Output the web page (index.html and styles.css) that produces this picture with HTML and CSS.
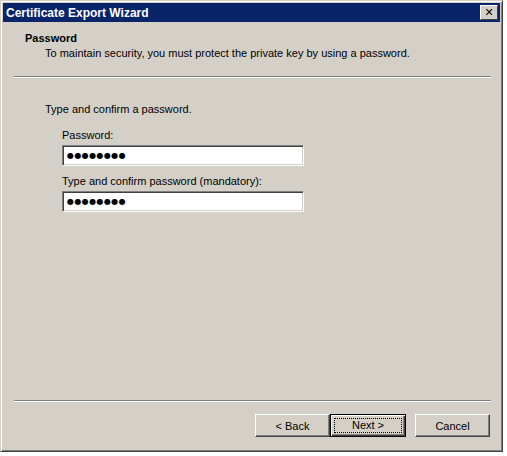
FILE: index.html
```html
<!DOCTYPE html>
<html lang="en">
<head>
    <meta charset="UTF-8">
    <title>Certificate Export Wizard</title>
    <link rel="stylesheet" href="styles.css">
</head>
<body>
    <div class="window">
        <div class="titlebar">
            <span class="title">Certificate Export Wizard</span>
            <span class="close">&#x2715;</span>
        </div>
        <div class="header">
            <div class="heading">Password</div>
            <div class="subheading">To maintain security, you must protect the private key by using a password.</div>
        </div>
        <div class="separator"></div>
        <div class="content">
            <p class="intro">Type and confirm a password.</p>
            <div class="fields">
                <label for="pw1">Password:</label>
                <div class="field" id="pw1">&#9679;&#9679;&#9679;&#9679;&#9679;&#9679;&#9679;&#9679;</div>
                <label for="pw2">Type and confirm password (mandatory):</label>
                <div class="field" id="pw2">&#9679;&#9679;&#9679;&#9679;&#9679;&#9679;&#9679;&#9679;</div>
            </div>
        </div>
        <div class="separator"></div>
        <div class="buttons">
            <button class="btn">&lt; Back</button>
            <button class="btn default"><span class="focus">Next &gt;</span></button>
            <button class="btn cancel">Cancel</button>
        </div>
    </div>
</body>
</html>
```
FILE: styles.css
```css
body {
    margin: 0;
    background: #ffffff;
    font-family: "Liberation Sans", Arial, sans-serif;
    font-size: 11px;
    color: #000;
}
.window {
    box-sizing: border-box;
    width: 503px;
    height: 452px;
    background: #d4d0c8;
    border-top: 1px solid #d4d0c8;
    border-left: 1px solid #d4d0c8;
    border-right: 1px solid #404040;
    border-bottom: 1px solid #404040;
    box-shadow: inset 1px 1px 0 #ffffff, inset -1px -1px 0 #808080;
    padding: 2px;
    display: flex;
    flex-direction: column;
}
.titlebar {
    height: 19px;
    background: #0a246a;
    display: flex;
    align-items: center;
    justify-content: space-between;
    padding: 0 2px 0 3px;
}
.title {
    color: #fff;
    font-weight: bold;
    font-size: 12px;
}
.close {
    width: 18px;
    height: 15px;
    box-sizing: border-box;
    background: #d4d0c8;
    border: 1px solid;
    border-color: #fff #404040 #404040 #fff;
    font-family: "DejaVu Sans", sans-serif;
    font-size: 11px;
    font-weight: bold;
    line-height: 13px;
    text-align: center;
}
.header {
    padding: 9px 0 0 22px;
    height: 45px;
}
.heading {
    font-weight: bold;
    line-height: 14px;
}
.subheading {
    padding-left: 20px;
    margin-top: 1px;
    line-height: 14px;
}
.separator {
    margin: 0 9px 0 11px;
    border-top: 1px solid #808080;
    border-bottom: 1px solid #ffffff;
    height: 0;
}
.content {
    flex: 1;
    padding: 24px 0 0 42px;
}
.intro {
    margin: 0;
    line-height: 14px;
}
.fields {
    padding: 12px 0 0 17px;
    display: flex;
    flex-direction: column;
}
.fields label {
    line-height: 14px;
}
.field {
    box-sizing: border-box;
    width: 242px;
    height: 21px;
    margin: 3px 0 8px;
    background: #fff;
    border-top: 1px solid #808080;
    border-left: 1px solid #808080;
    border-right: 1px solid #fff;
    border-bottom: 1px solid #fff;
    box-shadow: inset 1px 1px 0 #404040, inset -1px -1px 0 #d4d0c8;
    padding: 0 4px;
    font-family: "DejaVu Sans", sans-serif;
    font-size: 8px;
    letter-spacing: 0.4px;
    line-height: 19px;
}
.buttons {
    height: 47px;
    display: flex;
    justify-content: flex-end;
    align-items: flex-start;
    padding: 12px 10px 0 0;
    box-sizing: border-box;
}
.btn {
    box-sizing: border-box;
    width: 75px;
    height: 23px;
    background: #d4d0c8;
    border: 1px solid;
    border-color: #fff #404040 #404040 #fff;
    box-shadow: inset -1px -1px 0 #808080;
    font-family: "Liberation Sans", Arial, sans-serif;
    font-size: 11px;
    color: #000;
    padding: 0;
}
.btn.default {
    border: 1px solid #000;
    box-shadow: inset 1px 1px 0 #fff, inset -1px -1px 0 #404040, inset -2px -2px 0 #808080;
    width: 76px;
}
.focus {
    display: block;
    margin: 3px;
    border: 1px dotted #000;
    line-height: 13px;
}
.btn.cancel {
    margin-left: 9px;
}
```
